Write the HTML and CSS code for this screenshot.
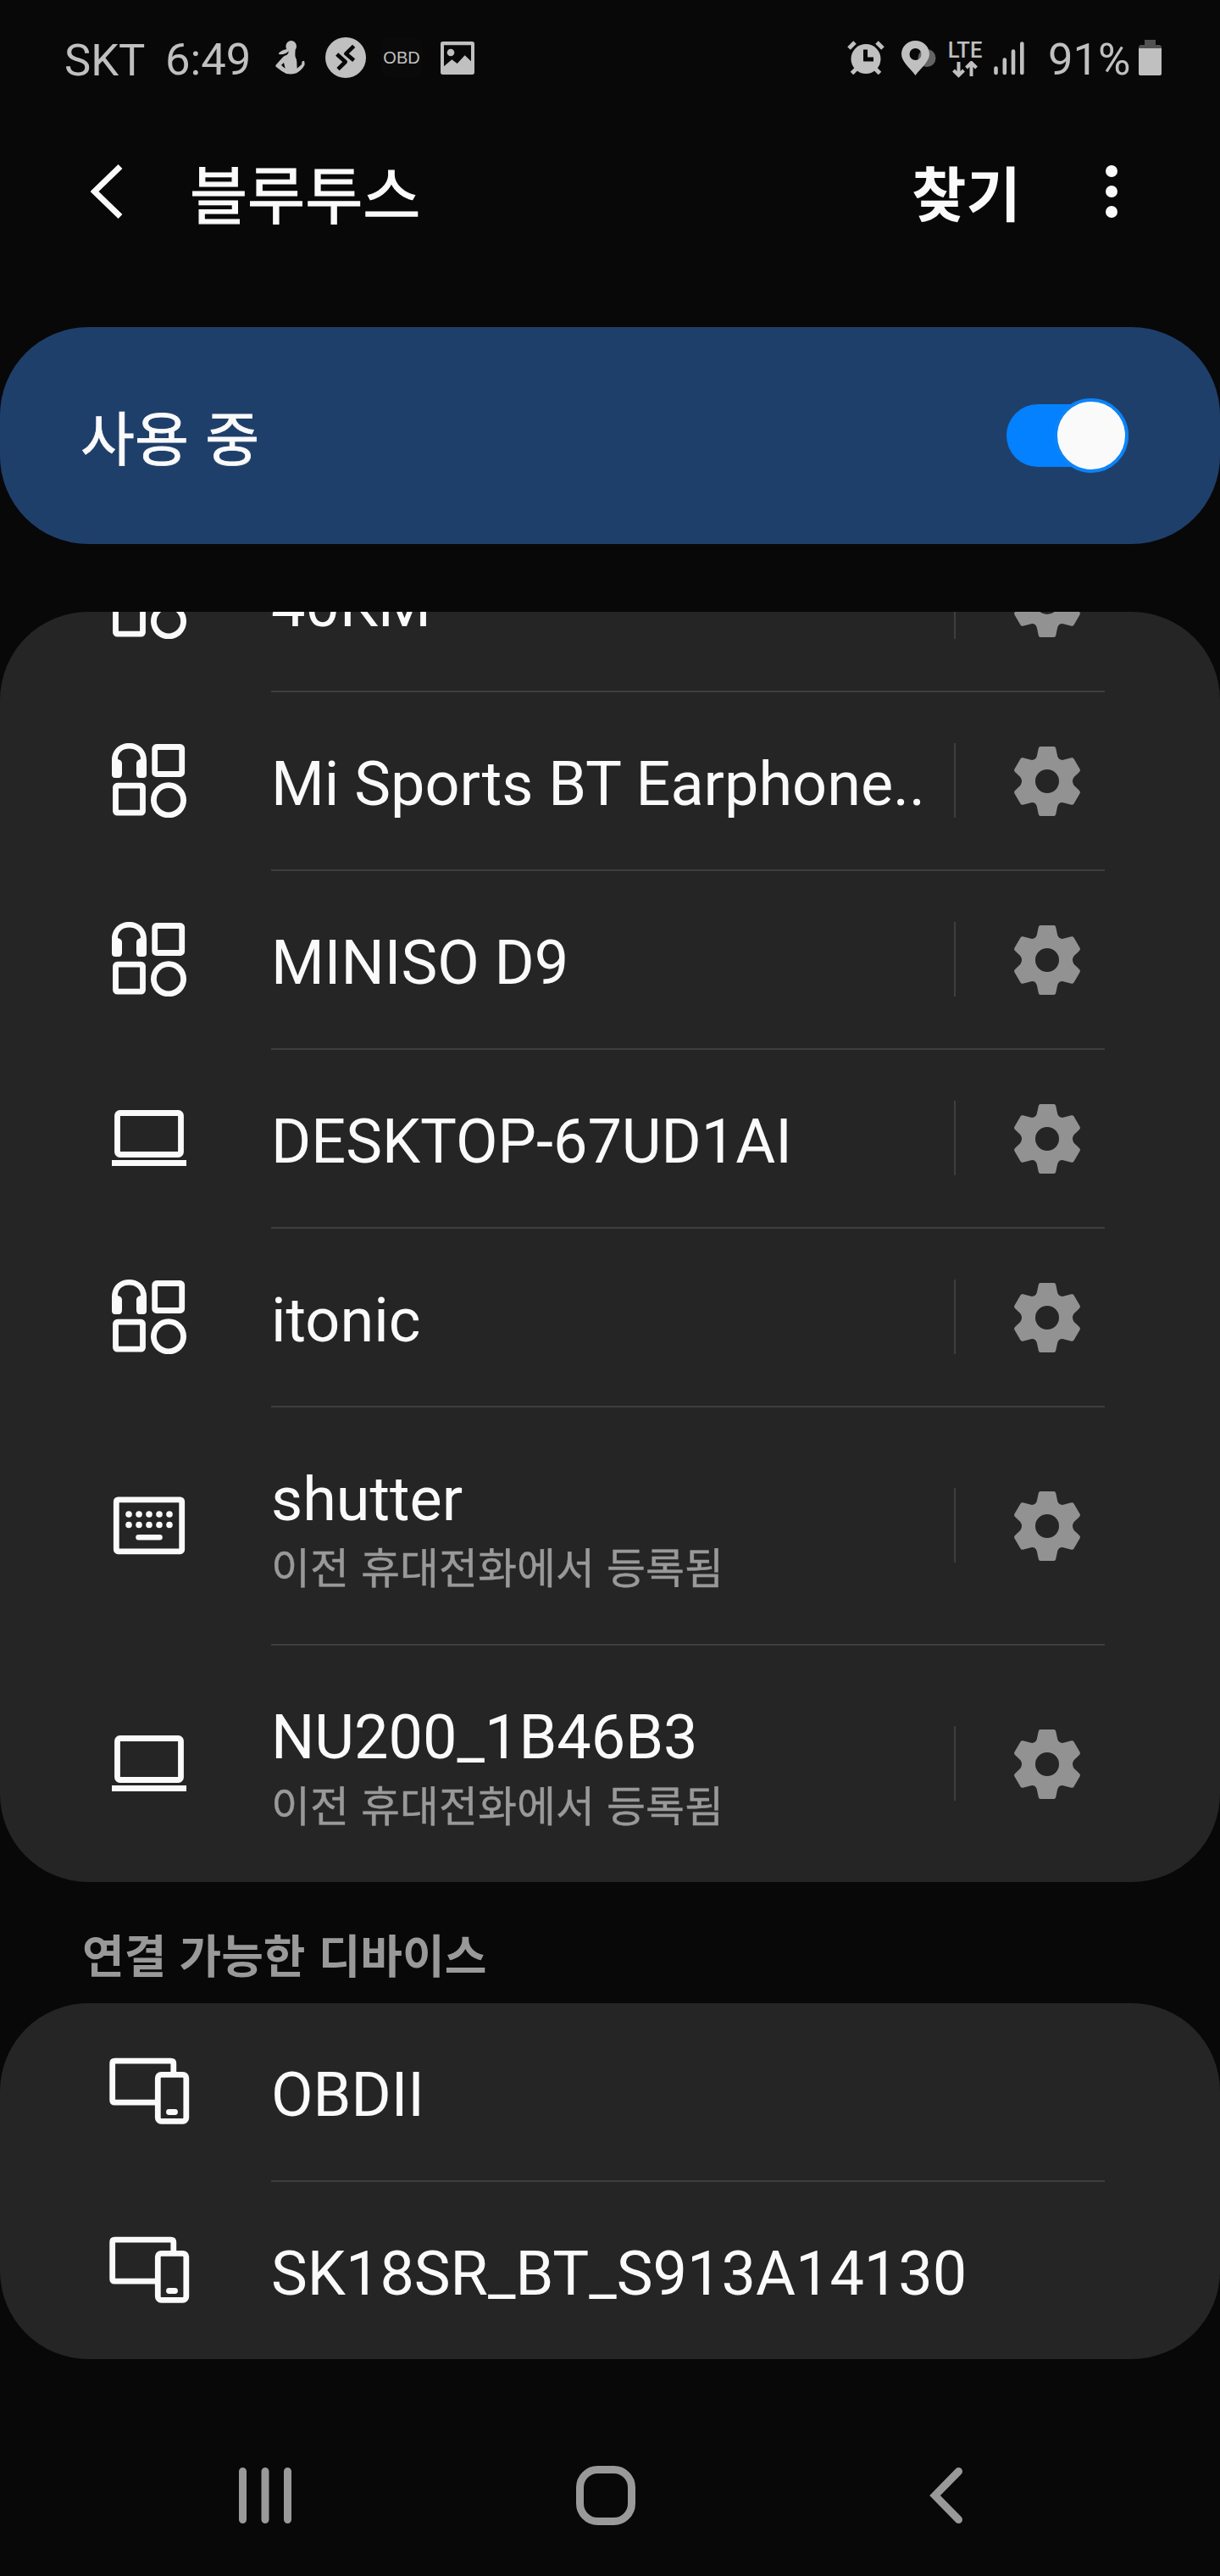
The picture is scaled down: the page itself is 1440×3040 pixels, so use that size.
FILE: index.html
```html
<!DOCTYPE html>
<html lang="ko">
<head>
<meta charset="utf-8">
<title>블루투스</title>
<link rel="stylesheet" href="styles.css">
</head>
<body>
<svg class="sprite" aria-hidden="true">
  <symbol id="gear" viewBox="-44 -44 88 88">
    <path fill-rule="evenodd" d="M-8-41H8Q9.700-41 10.200-39L12.200-29.500Q14-24.500 19-25.200L28.500-27.700Q30.500-28.200 31.500-26.500L38.500-14.500Q39.500-12.700 38-11L31.500-4.700Q28.500 0 31.500 4.700L38 11Q39.500 12.700 38.500 14.500L31.500 26.500Q30.500 28.200 28.500 27.700L19 25.200Q14 24.500 12.200 29.500L10.200 39Q9.700 41 8 41H-8Q-9.700 41-10.200 39L-12.200 29.500Q-14 24.500-19 25.200L-28.500 27.700Q-30.500 28.200-31.500 26.500L-38.500 14.500Q-39.500 12.700-38 11L-31.500 4.700Q-28.500 0-31.500-4.700L-38-11Q-39.500-12.700-38.500-14.500L-31.500-26.500Q-30.500-28.200-28.500-27.700L-19-25.200Q-14-24.500-12.200-29.500L-10.200-39Q-9.700-41-8-41ZM0-14A14 14 0 1 0 0 14A14 14 0 1 0 0-14Z"/>
  </symbol>
  <symbol id="audio" viewBox="0 0 88 88">
    <path fill="currentColor" stroke="none" d="M0 37V20.500C0 8 9 0 20.500 0S41 8 41 20.500V37Q41 41 37 41H33Q29 41 29 36V24Q29 20 34 19C34 11 28 6.500 20.500 6.500S7 11 7 19Q12 20 12 24V36Q12 41 8 41H4Q0 41 0 37Z"/>
    <rect x="50.700" y="4.500" width="32" height="32" rx="2"/>
    <rect x="4.500" y="50.200" width="32" height="32" rx="2"/>
    <circle cx="67" cy="67.300" r="17.600"/>
  </symbol>
  <symbol id="laptop" viewBox="0 0 88 88">
    <rect x="6.500" y="14.500" width="75" height="49" rx="3"/>
    <path d="M0 73.500H88"/>
  </symbol>
  <symbol id="keyboard" viewBox="0 0 88 88">
    <rect x="5.300" y="13.800" width="77.400" height="61" rx="2"/>
    <path stroke-linecap="round" stroke-width="7.600" d="M20 31h.01M32 31h.01M44 31h.01M56 31h.01M68 31h.01M20 43.500h.01M32 43.500h.01M44 43.500h.01M56 43.500h.01M68 43.500h.01"/>
    <path stroke-linecap="round" stroke-width="6.500" d="M31.500 58.300h25"/>
  </symbol>
  <symbol id="devices" viewBox="-6 0 100 88">
    <path d="M51 57.200H3.500Q.700 57.200.700 54.500V11Q.700 8.200 3.500 8.200H69.500Q72.800 8.200 72.800 11V22"/>
    <rect x="54.300" y="24.300" width="33.500" height="55" rx="4"/>
    <path stroke-linecap="round" d="M67.500 68.500h7"/>
  </symbol>
</svg>

<header class="status">
  <span class="carrier">SKT</span>
  <span class="clock">6:49</span>
  <svg class="st-yoga" viewBox="75 54 108 120"><ellipse cx="131" cy="74" rx="19" ry="20"/><path d="M122 88h24q-2 14 0 24q6 10 5 22l1 18l17-15q-3-11 8-12q3 10 1 16q-10 18-28 28q-12 5-36 2q-18-9-36-24q-4-4 0-8l24-27q6-6 14-8q7-5 6-16ZM105 132l-9 8q6 7 14 12Z" fill-rule="evenodd"/><path d="M124 86q-5 16-34 17l-4-3q8-12 30-16Z"/></svg>
  <svg class="st-remote" viewBox="0 0 144 144"><circle cx="72" cy="72" r="72"/><path class="cut" d="M41 60L71 87L45 113M101 31L73 58L101 82"/></svg>
  <span class="st-obd">OBD</span>
  <svg class="st-pic" viewBox="0 0 120 117"><path fill-rule="evenodd" d="M8 0H112Q120 0 120 8V109Q120 117 112 117H8Q0 117 0 109V8Q0 0 8 0ZM12 13V88L40 64L59 78L86 49L108 70V13Z"/><circle cx="36" cy="39" r="13"/></svg>
  <span class="spacer"></span>
  <svg class="st-alarm" viewBox="0 0 44 40"><circle cx="22" cy="21.500" r="17.500"/><path class="line" d="M2 9L9 2M42 9L35 2M11 33L5.500 38.500M33 33L38.500 38.500"/><path class="hand" d="M21.500 10.500V22H31"/></svg>
  <svg class="st-pin" viewBox="0 0 41 41"><circle cx="30" cy="20.500" r="10.500" opacity=".5"/><path fill-rule="evenodd" d="M16.500 0C26 0 33 7 33 16C33 25 22 33 16.500 41C11 33 0 25 0 16C0 7 7 0 16.500 0ZM16.500 9A7 7 0 1 0 16.500 23A7 7 0 1 0 16.500 9Z"/></svg>
  <span class="lte"><span>LTE</span><svg viewBox="0 0 30 20"><path d="M7.500 1V17M1.500 11L7.500 17L13.500 11M22.500 18V2M16.500 8L22.500 2L28.500 8"/></svg></span>
  <svg class="st-signal" viewBox="0 0 36 40"><path d="M2.500 31.500V37M12.800 21.500V37M23 11.500V37M33.300 2.500V37"/></svg>
  <span class="level">91%</span>
  <svg class="st-battery" viewBox="0 0 27 42"><path opacity=".4" d="M7 0H20V6H25L27 8V12H0V8L2 6H7Z"/><path d="M0 10H27V40Q27 42 25 42H2Q0 42 0 40Z"/></svg>
</header>

<nav class="appbar">
  <svg class="back" viewBox="0 0 38 64"><path d="M35 2.500L4.500 32L35 61.500"/></svg>
  <h1>블루투스</h1>
  <span class="scan">찾기</span>
  <svg class="more" viewBox="0 0 14 64"><circle cx="7" cy="8" r="7"/><circle cx="7" cy="32" r="7"/><circle cx="7" cy="56" r="7"/></svg>
</nav>

<section class="master">
  <span>사용 중</span>
  <span class="switch"><span class="thumb"></span></span>
</section>

<main>
  <ul class="card paired">
    <li><svg class="icon"><use href="#audio"/></svg><div class="text"><p class="name">40KM</p></div><i class="sep"></i><svg class="gear"><use href="#gear"/></svg></li>
    <li><svg class="icon"><use href="#audio"/></svg><div class="text"><p class="name">Mi Sports BT Earphone..</p></div><i class="sep"></i><svg class="gear"><use href="#gear"/></svg></li>
    <li><svg class="icon"><use href="#audio"/></svg><div class="text"><p class="name">MINISO D9</p></div><i class="sep"></i><svg class="gear"><use href="#gear"/></svg></li>
    <li><svg class="icon"><use href="#laptop"/></svg><div class="text"><p class="name">DESKTOP-67UD1AI</p></div><i class="sep"></i><svg class="gear"><use href="#gear"/></svg></li>
    <li><svg class="icon"><use href="#audio"/></svg><div class="text"><p class="name">itonic</p></div><i class="sep"></i><svg class="gear"><use href="#gear"/></svg></li>
    <li class="tall"><svg class="icon"><use href="#keyboard"/></svg><div class="text"><p class="name">shutter</p><p class="note">이전 휴대전화에서 등록됨</p></div><i class="sep"></i><svg class="gear"><use href="#gear"/></svg></li>
    <li class="tall"><svg class="icon"><use href="#laptop"/></svg><div class="text"><p class="name">NU200_1B46B3</p><p class="note">이전 휴대전화에서 등록됨</p></div><i class="sep"></i><svg class="gear"><use href="#gear"/></svg></li>
  </ul>
  <h2>연결 가능한 디바이스</h2>
  <ul class="card">
    <li><svg class="icon wide"><use href="#devices"/></svg><div class="text"><p class="name">OBDII</p></div></li>
    <li><svg class="icon wide"><use href="#devices"/></svg><div class="text"><p class="name">SK18SR_BT_S913A14130</p></div></li>
  </ul>
</main>

<footer class="softkeys">
  <svg class="recents" viewBox="0 0 62 70"><path d="M4.500 6.500V63.500M31 6.500V63.500M57.500 6.500V63.500"/></svg>
  <svg class="home" viewBox="0 0 70 70"><rect x="4.500" y="4.500" width="61" height="61" rx="21"/></svg>
  <svg class="prev" viewBox="0 0 40 70"><path d="M34.500 6.500L6.500 35L34.500 63.500"/></svg>
</footer>
</body>
</html>
```
FILE: styles.css
```css
* { box-sizing: border-box; margin: 0; padding: 0; }

body {
  width: 1440px;
  height: 3040px;
  overflow: hidden;
  background: #080808;
  color: #fafafa;
  font-family: Roboto, "Noto Sans CJK KR", sans-serif;
  display: flex;
  flex-direction: column;
}

svg { display: block; flex: none; }
.sprite { display: none; }

/* status bar */
.status {
  height: 136px;
  flex: none;
  padding: 0 69px 0 76px;
  display: flex;
  align-items: center;
  color: #c0c0c0;
  fill: #c0c0c0;
  font-size: 52.500px;
  line-height: 60px;
  white-space: nowrap;
}
.carrier { width: 119px; margin-top: 5px; }
.clock { width: 130px; margin-top: 3px; }
.st-yoga { width: 36px; height: 40px; }
.st-remote { width: 48px; height: 48px; margin-left: 23px; }
.st-remote .cut { fill: none; stroke: #080808; stroke-width: 14; stroke-linejoin: round; }
.st-obd {
  width: 48px;
  height: 48px;
  margin-left: 18px;
  border-radius: 10px;
  background: #0a0a0a;
  font: 20px/48px "Liberation Sans", sans-serif;
  text-align: center;
}
.st-pic { width: 40px; height: 39px; margin-left: 22px; }
.spacer { flex: 1; }
.st-alarm { width: 44px; height: 40px; }
.st-alarm .line { stroke: #c0c0c0; stroke-width: 5; }
.st-alarm .hand { fill: none; stroke: #080808; stroke-width: 5; }
.st-pin { width: 41px; height: 41px; margin-left: 20px; }
.lte {
  width: 40px;
  margin-left: 14px;
  padding-top: 4px;
  display: flex;
  flex-direction: column;
  align-items: center;
  font-size: 25.500px;
  font-weight: 500;
  line-height: 22px;
}
.lte svg { width: 30px; height: 20px; margin-top: 2px; fill: none; stroke: #c0c0c0; stroke-width: 4; }
.st-signal { width: 36px; height: 40px; margin: 2px 0 0 14px; fill: none; stroke: #c0c0c0; stroke-width: 4.600; stroke-linecap: round; }
.level { width: 107px; margin: 3px 0 0 28px; }
.st-battery { width: 27px; height: 42px; }

/* title bar */
.appbar {
  height: 250px;
  flex: none;
  padding: 58px 121px 0 107px;
  display: flex;
  align-items: flex-start;
  font-family: "Noto Sans CJK KR", sans-serif;
}
.back { width: 38px; height: 64px; fill: none; stroke: #fafafa; stroke-width: 7; }
h1 { flex: 1; margin: -13px 0 0 79px; font-size: 74px; font-weight: 400; line-height: 90px; -webkit-text-stroke: 1.200px #fafafa; }
.scan { width: 229px; margin-top: -13px; font-size: 70px; font-weight: 700; line-height: 90px; }
.more { width: 14px; height: 64px; fill: #fafafa; }

/* on/off banner */
.master {
  height: 256px;
  flex: none;
  padding: 0 108px 0 95px;
  border-radius: 104px;
  background: #1f3f6b;
  display: flex;
  align-items: center;
  justify-content: space-between;
  font: 400 69.500px/90px "Noto Sans CJK KR", sans-serif;
  -webkit-text-stroke: .8px #fafafa;
}
.switch {
  width: 144px;
  height: 74px;
  border-radius: 37px;
  background: #0381fe;
  display: flex;
  align-items: center;
  justify-content: flex-end;
}
.thumb {
  flex: none;
  width: 88px;
  height: 88px;
  border: 4px solid #0c84f8;
  border-radius: 50%;
  background: #fafafa;
}

/* device lists */
main { height: 2142px; flex: none; padding-top: 80px; }
.card {
  list-style: none;
  border-radius: 104px;
  background: #252525;
  overflow: hidden;
}
.paired { height: 1499px; display: flex; flex-direction: column; justify-content: flex-end; }
.card li {
  height: 211px;
  flex: none;
  padding: 0 136px 3px 132px;
  display: flex;
  align-items: center;
  background: linear-gradient(#3e3e3e, #3e3e3e) 320px 100% / 984px 2px no-repeat;
}
.card li.tall { height: 281px; }
.card li:last-child { height: 209px; padding-bottom: 1px; background: none; }
.card li.tall:last-child { height: 279px; }
.icon { width: 88px; height: 88px; color: #fafafa; fill: none; stroke: #fafafa; stroke-width: 6.800; }
.icon.wide { width: 100px; margin: 0 -6px; }
.text { width: 806px; flex: none; margin-left: 100px; align-self: flex-start; padding-top: 67px; white-space: nowrap; }
.name { font-size: 72px; line-height: 84px; }
.note { margin-top: 5px; color: #999; font: 50px/60px "Noto Sans CJK KR", sans-serif; -webkit-text-stroke: .4px #999; }
.sep { width: 2px; height: 88px; background: #3e3e3e; }
.gear { width: 88px; height: 88px; margin: 1px 0 0 64px; fill: #929292; }
h2 {
  height: 143px;
  padding: 45px 0 0 97px;
  color: #999;
  font: 700 54px/80px "Noto Sans CJK KR", sans-serif;
}

/* navigation keys */
.softkeys {
  flex: 1;
  padding: 126px 0 0 282px;
  display: flex;
  align-items: flex-start;
  fill: none;
  stroke: #999;
  stroke-width: 9;
  stroke-linecap: round;
}
.recents { width: 62px; height: 70px; }
.home { width: 70px; height: 70px; margin-left: 336px; }
.prev { width: 40px; height: 70px; margin-left: 347px; }
```
